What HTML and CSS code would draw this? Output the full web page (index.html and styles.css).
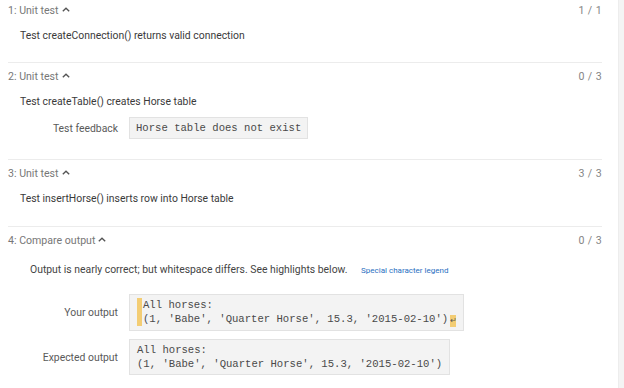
FILE: index.html
```html
<!DOCTYPE html>
<html>
<head>
<meta charset="utf-8">
<link rel="stylesheet" href="styles.css">
</head>
<body>
<div class="page">
  <div class="results">
    <section class="test first">
      <div class="test-head">
        <span class="title">1: Unit test <svg class="chev" viewBox="0 0 10 6" width="8" height="5"><path d="M1 5.2 L5 1.4 L9 5.2" fill="none" stroke="#555" stroke-width="1.7"/></svg></span>
        <span class="score">1 / 1</span>
      </div>
      <div class="desc">Test createConnection() returns valid connection</div>
    </section>
    <section class="test">
      <div class="test-head">
        <span class="title">2: Unit test <svg class="chev" viewBox="0 0 10 6" width="8" height="5"><path d="M1 5.2 L5 1.4 L9 5.2" fill="none" stroke="#555" stroke-width="1.7"/></svg></span>
        <span class="score">0 / 3</span>
      </div>
      <div class="desc">Test createTable() creates Horse table</div>
      <div class="row feedback">
        <div class="label">Test feedback</div>
        <pre class="code">Horse table does not exist</pre>
      </div>
    </section>
    <section class="test">
      <div class="test-head">
        <span class="title">3: Unit test <svg class="chev" viewBox="0 0 10 6" width="8" height="5"><path d="M1 5.2 L5 1.4 L9 5.2" fill="none" stroke="#555" stroke-width="1.7"/></svg></span>
        <span class="score">3 / 3</span>
      </div>
      <div class="desc">Test insertHorse() inserts row into Horse table</div>
    </section>
    <section class="test last">
      <div class="test-head">
        <span class="title">4: Compare output <svg class="chev" viewBox="0 0 10 6" width="8" height="5"><path d="M1 5.2 L5 1.4 L9 5.2" fill="none" stroke="#555" stroke-width="1.7"/></svg></span>
        <span class="score">0 / 3</span>
      </div>
      <div class="msg">Output is nearly correct; but whitespace differs. See highlights below. <a class="legend">Special character legend</a></div>
      <div class="row out">
        <div class="label">Your output</div>
        <pre class="code"><span class="hl bar"></span>All horses:
<span class="hl bar"></span>(1, 'Babe', 'Quarter Horse', 15.3, '2015-02-10')<span class="hl nl">↵</span></pre>
      </div>
      <div class="row out exp">
        <div class="label">Expected output</div>
        <pre class="code">All horses:
(1, 'Babe', 'Quarter Horse', 15.3, '2015-02-10')</pre>
      </div>
    </section>
  </div>
  <div class="scroll"></div>
</div>
</body>
</html>
```
FILE: styles.css
```css
html, body {
  margin: 0;
  padding: 0;
  background: #fff;
}
body {
  font-family: Roboto, "Liberation Sans", sans-serif;
  width: 624px;
  height: 388px;
  overflow: hidden;
}
.page {
  display: flex;
  height: 388px;
}
.results {
  flex: 1;
  padding: 0 16px 0 8px;
}
.scroll {
  width: 5px;
  background: #f4f4f4;
  border-left: 1px solid #ededed;
}
.test {
  border-bottom: 1px solid #ececec;
  padding-bottom: 19px;
}
.test.first {
  padding-bottom: 18px;
}
.test.last {
  border-bottom: none;
}
.test-head {
  display: flex;
  justify-content: space-between;
  align-items: center;
  height: 20px;
  padding-top: 3px;
  font-size: 10.6px;
  color: #777;
}
.test.first .test-head {
  padding-top: 0;
}
.title {
  display: flex;
  align-items: center;
  gap: 3px;
}
.chev {
  margin-top: -1px;
}
.score {
  color: #858585;
  font-size: 10.6px;
  letter-spacing: 0.4px;
}
.desc {
  font-size: 10.4px;
  color: #3a3a3a;
  padding: 8px 0 0 12px;
  line-height: 16px;
}
.row {
  display: flex;
  align-items: center;
}
.feedback {
  margin-top: 7px;
  margin-bottom: 1px;
}
.label {
  width: 121px;
  flex: none;
  text-align: right;
  padding-right: 11px;
  box-sizing: border-box;
  font-size: 10.4px;
  color: #5a5a5a;
}
.code {
  margin: 0;
  font-family: "Liberation Mono", monospace;
  font-size: 10.6px;
  line-height: 14px;
  color: #4a4a4a;
  background: #f3f3f3;
  border: 1px solid #e2e2e2;
  padding: 3px 6px;
}
.msg {
  font-size: 10.4px;
  color: #444;
  padding: 12px 0 0 22px;
  line-height: 16px;
}
.legend {
  color: #2a6fc1;
  font-size: 8px;
  margin-left: 11px;
}
.out {
  margin-top: 15px;
}
.out.exp {
  margin-top: 8px;
}
.out .code {
  padding: 3px 7px 3px 7px;
}
.hl {
  background: #f3cd74;
}
.bar {
  display: inline-block;
  width: 5px;
  margin-right: 1px;
  height: 14px;
  vertical-align: top;
}
.nl {
  display: inline-block;
  font-family: "DejaVu Sans", sans-serif;
  color: #555;
  font-size: 8px;
  line-height: 12px;
  width: 6px;
  text-align: center;
  margin-left: 2px;
  vertical-align: -1px;
}
```
